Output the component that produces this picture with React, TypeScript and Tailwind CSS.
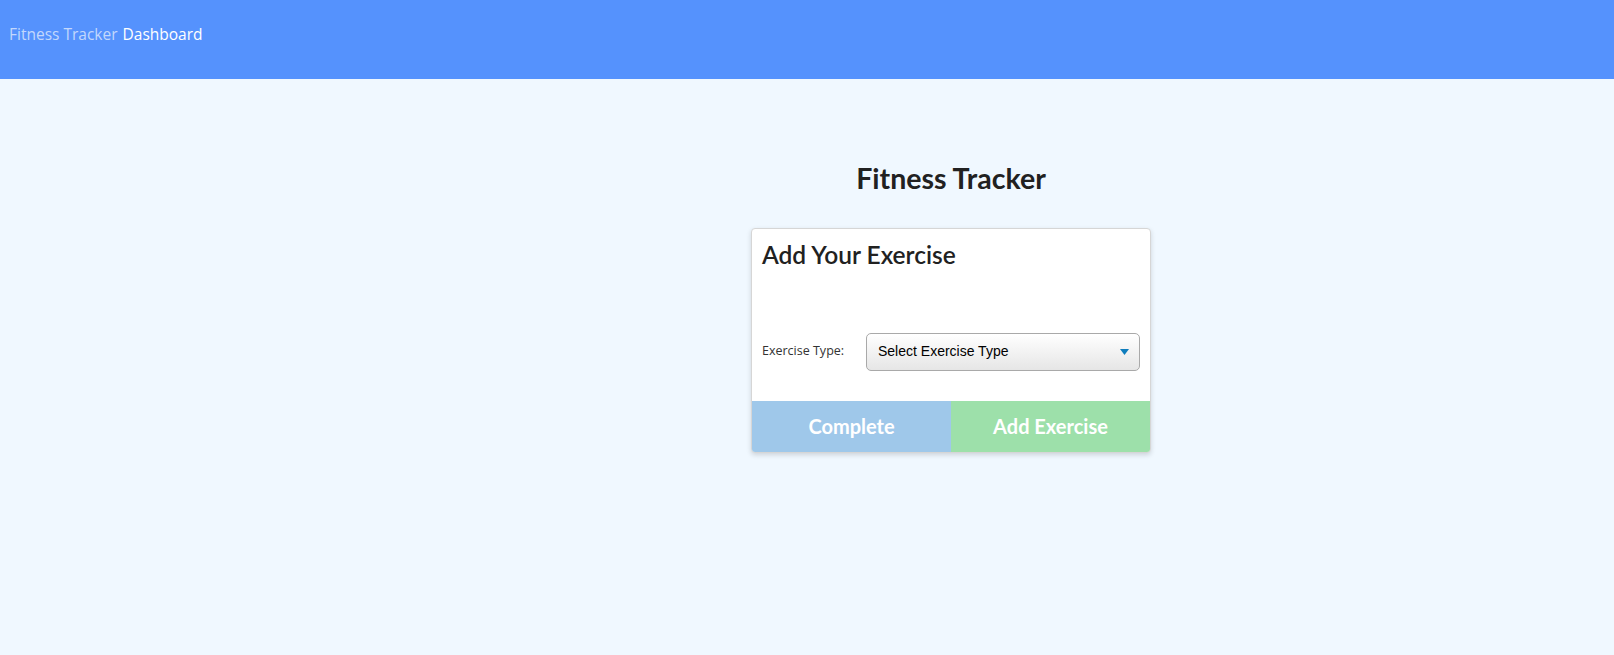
import React from "react";

export default function App() {
  return (
    <div className="min-h-[655px] bg-[#f0f8ff]">
      {/* top bar */}
      <nav className="h-[79px] bg-[#5592fd] flex items-center px-[9px] pb-[9px] font-['Open_Sans',sans-serif] text-[15.5px]">
        <span className="text-[#c3d8fc]">Fitness Tracker</span>
        <span className="text-white ml-[5px]">Dashboard</span>
      </nav>

      <div className="flex">
        <div className="w-[288px] shrink-0"></div>
        <main className="flex-1 flex flex-col items-center font-['Lato',sans-serif]">
          <h1 className="mt-[82px] text-[28.5px] font-bold text-[#212121] leading-[1.2]">
            Fitness Tracker
          </h1>

          <div className="mt-[33px] w-[400px] bg-white border border-[#d6d6d6] rounded-[4px] shadow-[0_2px_5px_rgba(0,0,0,0.15)] overflow-hidden">
            <h2 className="pt-[11px] px-[10px] text-[24.5px] font-semibold text-[#212121] leading-[1.2]">
              Add Your Exercise
            </h2>

            <div className="mt-[63px] mb-[30px] flex items-center px-[10px]">
              <label className="w-[104px] shrink-0 text-[12.5px] text-[#333] font-['Open_Sans',sans-serif]">
                Exercise Type:
              </label>
              <div className="relative flex-1">
                <select className="appearance-none w-full h-[38px] rounded-[5px] border border-[#a9a9a9] bg-gradient-to-b from-white to-[#e6e6e6] pl-[11px] text-[14px] text-black font-['Liberation_Sans',Arial,sans-serif]">
                  <option>Select Exercise Type</option>
                </select>
                <svg
                  className="absolute right-[11px] top-[16px] pointer-events-none"
                  width="9"
                  height="6"
                  viewBox="0 0 9 6"
                >
                  <path d="M0 0h9L4.5 6z" fill="#0f7dbd" />
                </svg>
              </div>
            </div>

            <div className="flex h-[51px]">
              <button className="flex-1 bg-[#9fc8ea] text-white text-[20px] font-bold">
                Complete
              </button>
              <button className="flex-1 bg-[#9de0aa] text-white text-[20px] font-bold">
                Add Exercise
              </button>
            </div>
          </div>
        </main>
      </div>
    </div>
  );
}
